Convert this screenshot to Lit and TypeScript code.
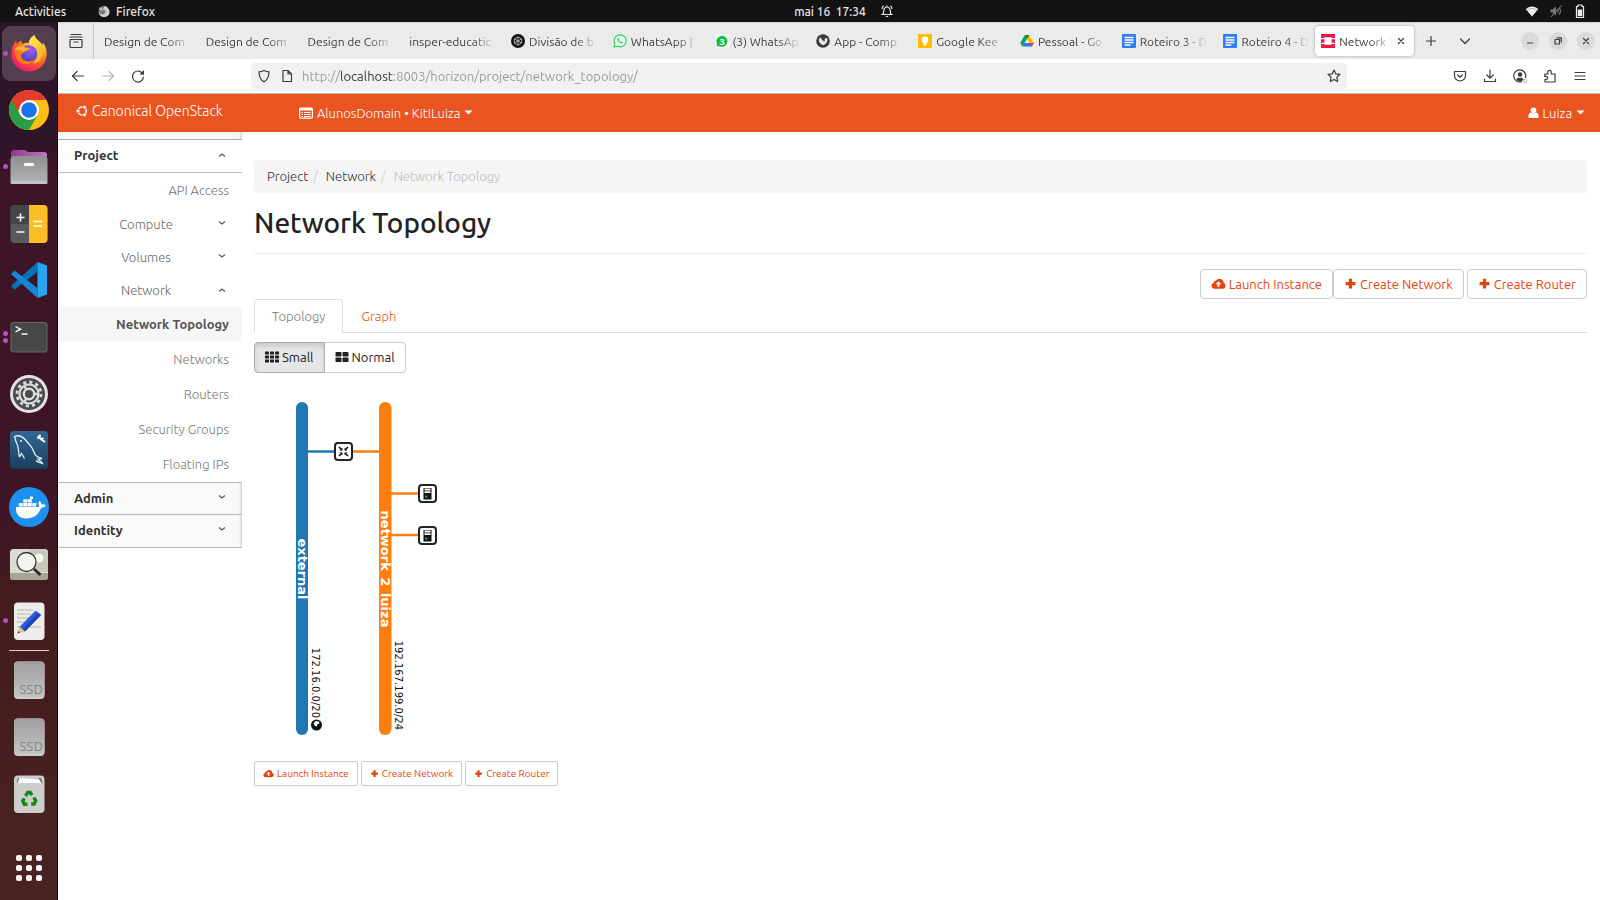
import { LitElement, html, svg, css, nothing } from "lit";
import { customElement } from "lit/decorators.js";
import { classMap } from "lit/directives/class-map.js";

const box = (size: number, content: unknown, view = 24) =>
  html`<svg width=${size} height=${size} viewBox="0 0 ${view} ${view}" aria-hidden="true">${content}</svg>`;

/* ---------- dock artwork ---------- */
const art = {
  firefox: svg`
    <defs>
      <radialGradient id="ffa" cx=".75" cy=".15" r="1"><stop offset="0" stop-color="#fff04a"/><stop offset=".35" stop-color="#ffb01f"/><stop offset=".62" stop-color="#ff5a2c"/><stop offset=".85" stop-color="#f7265f"/><stop offset="1" stop-color="#d0147a"/></radialGradient>
      <radialGradient id="ffb" cx=".6" cy=".3" r=".8"><stop offset="0" stop-color="#a05bff"/><stop offset="1" stop-color="#3e3fb8"/></radialGradient>
      <linearGradient id="ffc" x1="0" y1="0" x2="1" y2="1"><stop offset="0" stop-color="#fff352"/><stop offset="1" stop-color="#ffa41c"/></linearGradient>
    </defs>
    <path d="M20 38.500C10 38.500 2.300 31 2.300 21.500 2.300 16 4 11.500 7 7.500L8 11 12 7.500 13 11C16 9.500 19 9.500 20 9.800 20 7 22 4 25.500 2 26 6 31 8 33.500 12L34 9.500C36.800 13 37.700 17 37.700 21 37.700 31 30 38.500 20 38.500z" fill="url(#ffa)"/>
    <circle cx="20" cy="20.500" r="8.300" fill="url(#ffb)"/>
    <path d="M25.500 2C26 8 34 10 34 19 34 27 28 31 24 30 29 27 30 20 27 15.500 25 12.500 20 13 20 9.800 20 7 22 4 25.500 2z" fill="url(#ffc)"/>
    <path d="M5.500 17C8 13.500 12 13 15 14.500L20.500 15C19.500 18 17 18 15.500 18.500 13.500 20 13 22 11.500 22 12.500 28 20 30 24 27 21 33 12 32 8.500 27 6.500 24 5.500 20 5.500 17z" fill="#ff7a1d"/>
    <path d="M5 17C9 12 13 12.500 15.500 14.500L20.500 15C19 17.500 16 17.500 14.500 19 11 17 8 16.500 5 17z" fill="#ffb52b"/>`,
  chrome: svg`
    <circle cx="20" cy="20" r="20" fill="#fcc013"/>
    <path d="M37.300 10H20L20 20H2.700V10A20 20 0 0 1 37.300 10z" fill="#e33b2e"/>
    <path d="M2.700 10L11.300 25 20 29.500 28.700 25 20 40A20 20 0 0 1 2.700 10z" fill="#2a9b47"/>
    <circle cx="20" cy="20" r="10" fill="#fff"/><circle cx="20" cy="20" r="7.800" fill="#1a73e8"/>`,
  files: svg`
    <defs><linearGradient id="fla" x1="0" y1="0" x2="1" y2="0"><stop offset="0" stop-color="#8c3a8e"/><stop offset="1" stop-color="#c873cc"/></linearGradient>
    <linearGradient id="flb" x1="0" y1="0" x2="0" y2="1"><stop offset="0" stop-color="#8f8f8f"/><stop offset="1" stop-color="#b4b4b4"/></linearGradient></defs>
    <path d="M2 6a3 3 0 0 1 3-3h11l3 2h16a3 3 0 0 1 3 3v12H2z" fill="url(#fla)"/>
    <rect x="1.500" y="9" width="37" height="28" rx="3.500" fill="url(#flb)"/><rect x="1.500" y="34" width="37" height="3" rx="1.500" fill="#c4c4c4"/>
    <rect x="15" y="16" width="10" height="3" rx="1" fill="#fff"/>`,
  calc: svg`
    <rect x="1.500" y="1" width="37" height="38" rx="4" fill="#5a5a5a"/><path d="M5.500 1H20v19H1.500V5a4 4 0 0 1 4-4z" fill="#454545"/>
    <path d="M20 1h14.500a4 4 0 0 1 4 4v30a4 4 0 0 1-4 4H20z" fill="#fcbd26"/>
    <path d="M7.500 13.500h8M11.500 9.500v8M7.500 28h8" stroke="#fff" stroke-width="1.600"/><path d="M24.500 17.500h8.500M24.500 22h8.500" stroke="#fff" stroke-width="1.500"/>`,
  code: svg`
    <path d="M28.500 2L2 26l3.500 3.500 23-17.500z" fill="#0b72b8"/><path d="M28.500 38L2 14l3.500-3.500 23 17.500z" fill="#1387d3"/>
    <path d="M28.500 2L38 5.500v29L28.500 38z" fill="#27a5f2"/>`,
  terminal: svg`
    <rect x="1.500" y="5" width="37" height="30.500" rx="3.500" fill="#696969"/><rect x="2.500" y="6" width="35" height="28.500" rx="2.500" fill="#474747"/>
    <path d="M6.500 9.500l5 2.700-5 2.700M12.500 17h6" stroke="#fff" stroke-width="1.400" fill="none"/>`,
  settings: svg`
    <circle cx="20" cy="20" r="19" fill="#e2e2e2"/><circle cx="20" cy="20" r="16" fill="#4b4b4b"/>
    <circle cx="20" cy="20" r="12" fill="none" stroke="#dcdcdc" stroke-width="2.800" stroke-dasharray="3.140 3.140"/>
    <circle cx="20" cy="20" r="9.500" fill="none" stroke="#dcdcdc" stroke-width="2.200"/>
    <circle cx="20" cy="20" r="5.200" fill="none" stroke="#dcdcdc" stroke-width="2.400"/>
    <path d="M25.500 20H30M17.200 15.200L15 11.400M17.200 24.800L15 28.600" stroke="#dcdcdc" stroke-width="2.400"/>`,
  mysql: svg`
    <defs><linearGradient id="mya" x1="0" y1="0" x2="0" y2="1"><stop offset="0" stop-color="#2f6797"/><stop offset="1" stop-color="#193f5c"/></linearGradient></defs>
    <rect x="1" y="1" width="38" height="38" rx="4" fill="url(#mya)"/>
    <path d="M10.500 27C9 22 10 18 8 14 6 10 6 7.500 5.500 6.500 9 5 13 6 16 9.500 20 14 23 16 25 22c1 3 2 5 8 6.500-2 .5-2 1-4 .7 1.500 2 4 2 4.500 4.300-2-1.200-5-1-6.500-3M10.500 27l2-3.500 3 5" fill="none" stroke="#e4edf4" stroke-width="1.300"/>
    <circle cx="12" cy="11" r=".9" fill="#fff"/><path d="M29 6l4 4 3 2M32.500 9.500l2-1.500M28.500 8.500l3-3.500" stroke="#fff" stroke-width="2" fill="none"/>`,
  docker: svg`
    <circle cx="20" cy="20" r="20" fill="#1d91ee"/>
    <path d="M7 20h21.500c1 0 1.500-.5 1.700-1.500-1.200-2-.8-3.500.3-4.800 1.400 1 2 2.500 1.800 3.700 1.600-.2 3.300 0 4.500.9-.8 1.800-2.400 2.500-4.600 2.500C29.500 28 24.500 31.500 17 31.500 10 31.500 6.500 27 7 20z" fill="#fff"/>
    <path d="M9.800 16h4v3.500h-4zM14.300 16h4v3.500h-4zM18.800 16h4v3.500h-4zM23.300 16h4v3.500h-4zM14.300 12.200h4v3.400h-4zM18.800 12.200h4v3.400h-4zM21 9.500h3v2.500h-3z" fill="#fff"/>`,
  viewer: svg`
    <rect x="1" y="5" width="38" height="31" rx="3.500" fill="#dcdbd2"/><path d="M20 5h15.500A3.500 3.500 0 0 1 39 8.500V28H24z" fill="#c9c8bd"/>
    <path d="M1 29h38v3.500a3.500 3.500 0 0 1-3.500 3.500h-31A3.500 3.500 0 0 1 1 32.500z" fill="#a6a493"/><circle cx="30" cy="14" r="4.500" fill="#f5f5f2"/>
    <circle cx="17.500" cy="18" r="9.500" fill="#f3f3f0" stroke="#3a3a3a" stroke-width="1.300"/><path d="M25 25l6.500 6" stroke="#2b2b2b" stroke-width="2.800"/>`,
  editor: svg`
    <rect x="5" y="1.500" width="30.500" height="37.500" rx="4" fill="#ececec"/>
    <path d="M8 9h16M8 13h14M8 17h14M8 21h11M8 26h24" stroke="#b9b49c" stroke-width="1.200"/>
    <path d="M26.500 9.500L32 14 16 30.500 10.500 26z" fill="#2c5fdb"/><path d="M29 11.500L32 14 16 30.500l-2.700-2z" fill="#1c45b4"/>
    <path d="M10.500 26l5.500 4.500-7.500 2.300z" fill="#f4bd86"/><path d="M9.300 30l1.600 1.600-2.600 1z" fill="#333"/>`,
  ssd: svg`
    <defs><linearGradient id="sda" x1="0" y1="0" x2="0" y2="1"><stop offset="0" stop-color="#9f9f9f"/><stop offset="1" stop-color="#c4c4c4"/></linearGradient></defs>
    <rect x="5" y="1.500" width="30.500" height="37.500" rx="4" fill="#d0d0d0"/><rect x="5" y="1.500" width="30.500" height="36" rx="4" fill="url(#sda)"/>
    <text x="22" y="34" text-anchor="middle" font-family="Open Sans, sans-serif" font-size="13" fill="#858585">SSD</text>`,
  trash: svg`
    <rect x="5" y="1.500" width="30.500" height="37.500" rx="4" fill="#cdcdcd"/><path d="M9 4h23l1.500 5h-26z" fill="#6f6f6f"/><path d="M10.500 4l19 .5 3 4.500H8.500z" fill="#fafafa"/>
    <g fill="none" stroke="#118a11" stroke-width="3.400"><path d="M16.500 22l2.200-3.500h2.600l1.700 2.600"/><path d="M24.800 23.500l1.900 3.200-1.500 3.300h-3"/><path d="M18.500 30.200h-3.200L13.800 27l1.500-2.600"/></g>`,
};

/* ---------- small line icons ---------- */
const line = (d: string) => svg`<path d=${d} fill="none" stroke="currentColor" stroke-width="1.200" stroke-linecap="round" stroke-linejoin="round"/>`;
const cloud = svg`<path d="M13.500 7.300C13.500 4.500 11.300 3 9 3 7.300 3 6 3.800 5.300 5.100 4 4.700 2.700 5.700 2.900 7.200 1.300 7.800.5 9 .5 10.300.5 12 1.800 13.500 3.700 13.500h8.600c1.800 0 3.200-1.400 3.200-3.200 0-1.400-.8-2.500-2-3z" fill="currentColor"/><path d="M8 5.500L4.900 8.800H7v3h2v-3h2.100z" fill="#fff"/>`;
const plus = svg`<path d="M6 2h4v4h4v4h-4v4H6v-4H2V6h4z" fill="currentColor"/>`;

const fav: Record<string, unknown> = {
  gpt: svg`<circle cx="7" cy="7" r="7" fill="#111"/><path d="M7 2.800l3.600 2.100v4.200L7 11.200 3.400 9.100V4.900zM7 2.800v4.200l3.600 2.100M3.400 4.900L7 7v4.200M3.400 9.100L7 7l3.600-2.100" fill="none" stroke="#ddd" stroke-width=".7"/>`,
  wa: svg`<path d="M1 13l.9-3.200A6 6 0 1 1 4.200 12.100z" fill="#f0f7f2" stroke="#2fd366" stroke-width="1.200"/><path d="M4.600 4.200c.7-.8 1.300-.2 1.700 1l-.5.8c.5 1 1.200 1.700 2.200 2.100l.8-.7c1.200.4 1.600.8.9 1.600-2 1.700-6.500-2.700-5.100-4.800z" fill="#2fd366"/>`,
  wa3: svg`<path d="M0 0h14v14H0z" fill="#f6f6f6"/><path d="M1.500 12.500l.5-2.700A5.500 5.500 0 1 1 4 12z" fill="#0bc13f"/><text x="7" y="10.500" font-family="Open Sans, sans-serif" font-size="9" font-weight="700" text-anchor="middle" fill="#fff">3</text>`,
  app: svg`<circle cx="7" cy="7" r="6.800" fill="#3b3b3b"/><path d="M2.800 5l2.200-2 1 2.500 2 1.700 1-2.700 2.200-.5.3 2.500-1.300 3-2.700 1.700-2.700-1.200-1.600-2z" fill="#e8e8e8"/><path d="M4.500 2.500l4 4.700" stroke="#3b3b3b" stroke-width="1.200"/>`,
  keep: svg`<rect width="14" height="14" rx="1" fill="#fbbc04"/><circle cx="7" cy="6" r="3.400" fill="#fff"/><rect x="5.500" y="9" width="3" height="2.500" fill="#fff"/>`,
  drive: svg`<path d="M4.800 1h4.400L4.600 9 2.400 12.600.2 9z" fill="#11a25b"/><path d="M4.800 1h4.400l4.600 8H9.400z" fill="#fbbc04"/><path d="M4.600 9h9.200l-2.200 3.600H2.400z" fill="#2d79ea"/><path d="M9.400 9h4.400l-2.200 3.600z" fill="#e94335"/><path d="M4.800 1L7 4.900 9.200 1z" fill="#188038"/>`,
  docs: svg`<rect width="14" height="14" rx="1" fill="#2f7df4"/><path d="M2.500 3.500h9M2.500 6h9M2.500 8.500h9M2.500 11h6" stroke="#fff" stroke-width="1.300"/>`,
  os: svg`<path d="M0 0h14v4h-3.500V3.300h-7V4H0zM0 5.200h3.500v3.600H0zM10.500 5.200H14v3.600h-3.500zM0 10h3.500v.7h7V10H14v4H0z" fill="#ed1944"/>`,
};

interface Tab { title: string; icon?: string; active?: boolean }
const tabs: Tab[] = [
  { title: "Design de Com" }, { title: "Design de Com" }, { title: "Design de Com" },
  { title: "insper-educatic" }, { title: "Divisão de b", icon: "gpt" }, { title: "WhatsApp |", icon: "wa" },
  { title: "(3) WhatsAp", icon: "wa3" }, { title: "App - Comp", icon: "app" }, { title: "Google Kee", icon: "keep" },
  { title: "Pessoal - Go", icon: "drive" }, { title: "Roteiro 3 - D", icon: "docs" }, { title: "Roteiro 4 - D", icon: "docs" },
  { title: "Network T", icon: "os", active: true },
];

const base = css`
  * { box-sizing: border-box; }
  button, input { font: inherit; color: inherit; border: 0; padding: 0; margin: 0; background: none; }
  a { color: inherit; text-decoration: none; }
  svg { display: block; flex: none; }
`;

@customElement("system-bar")
class SystemBar extends LitElement {
  static styles = [base, css`
    :host { display: grid; grid-template-columns: 1fr auto 1fr; align-items: center; height: 22px; background: #131313; color: #e6e6e6; font-size: 12px; font-weight: 500; padding: 0 13px 0 15px; }
    .side { display: flex; align-items: center; gap: 32px; }
    .app { display: flex; align-items: center; gap: 6px; }
    .mid { display: flex; align-items: center; gap: 14px; padding-left: 86px; }
    .end { justify-content: flex-end; gap: 10px; }
    time { white-space: pre; }
  `];
  render() {
    return html`
      <div class="side"><button>Activities</button>
        <button class="app">${box(12, svg`<circle cx="6" cy="6.300" r="5.500" fill="#777"/><path d="M7.800.5C8 3 11.500 3.500 11.500 7S9 12 6 12C3 12 .8 9.800.8 7c1.200 2.800 4.400 3 5.900 1.400C9 6 6.500 4.500 5 4.600 5 2.500 7 2 7.800.5z" fill="#cfcfcf"/><path d="M1 4l1-2 1.200 1L5.500 4.800 3.500 6z" fill="#bbb"/>`, 12)}Firefox</button></div>
      <div class="mid"><time>mai 16  17:34</time>
        ${box(14, svg`<path d="M2.500 10.500c1.500-1 1-3 1.500-5S5.500 3 7 3s2.500.5 3 2.500 0 4 1.500 5zM5.800 12.500h2.400M7 3V1.500M2 5c0-1.500.6-2.500 1.600-3.300M12 5c0-1.500-.6-2.500-1.600-3.300" fill="none" stroke="#e6e6e6" stroke-width="1.200"/>`, 14)}</div>
      <div class="side end">
        ${box(14, svg`<path d="M7 12.500L.8 5.200C2.500 3.300 4.600 2.500 7 2.500s4.500.8 6.200 2.700z" fill="#eee"/><path d="M2 6.200c3-2.400 7-2.400 10 0" fill="none" stroke="#999" stroke-width=".7"/>`, 14)}
        ${box(14, svg`<path d="M1.500 5.500h2L7 2.500v9l-3.500-3h-2z" fill="#777"/><path d="M8.500 5c1 1 1 3 0 4M10 3.500c2 2 2 5 0 7M2 13L12.500 1.500" fill="none" stroke="#777" stroke-width="1.100"/>`, 14)}
        ${box(14, svg`<path d="M5 1h4v1.500h1.500v11h-7v-11H5z" fill="none" stroke="#eee" stroke-width="1.200"/><rect x="4.800" y="5.500" width="4.400" height="6.700" fill="#eee"/>`, 14)}
      </div>`;
  }
}

@customElement("app-dock")
class AppDock extends LitElement {
  static styles = [base, css`
    :host { display: flex; flex-direction: column; width: 58px; padding-top: 3px; background: linear-gradient(170deg, #2d152a 0%, #2f1529 14%, #3c1527 17%, #3d1527 52%, #451c1f 66%, #471f20 84%, #492321 100%); border-right: 1px solid #0d0408; }
    button { display: grid; place-items: center; flex: 1 1 0; min-height: 0; position: relative; margin: 0 1px 0 2px; border: solid transparent; border-width: 1px 0; border-radius: 9px; background-clip: padding-box; }
    .on { background-color: #533f4e; }
    .dots { position: absolute; left: 1px; top: 0; bottom: 0; display: flex; flex-direction: column; justify-content: center; gap: 2px; }
    .dots i { width: 5px; height: 5px; border-radius: 50%; background: #b452b8; }
    hr { border: 0; height: 1px; width: 40px; margin: 1px auto; background: #d8cfd0; }
    .apps { flex: 0 0 78px; padding-top: 14px; }
  `];
  item(name: keyof typeof art, label: string, dots = 0, on = false) {
    return html`<button class=${classMap({ on })} aria-label=${label}>
      ${dots ? html`<span class="dots">${Array.from({ length: dots }, () => html`<i></i>`)}</span>` : nothing}
      ${box(40, art[name], 40)}</button>`;
  }
  render() {
    return html`
      ${this.item("firefox", "Firefox", 1, true)}${this.item("chrome", "Chrome")}${this.item("files", "Files", 1)}
      ${this.item("calc", "Calculator")}${this.item("code", "Visual Studio Code")}${this.item("terminal", "Terminal", 2)}
      ${this.item("settings", "Settings")}${this.item("mysql", "MySQL Workbench")}${this.item("docker", "Docker")}
      ${this.item("viewer", "Image Viewer")}${this.item("editor", "Text Editor", 1)}
      <hr>
      ${this.item("ssd", "Drive 1")}${this.item("ssd", "Drive 2")}${this.item("trash", "Trash")}
      <button class="apps" aria-label="Show Applications">${box(28, svg`${[1, 11, 21].map(y => [1, 11, 21].map(x => svg`<rect x=${x} y=${y} width="6" height="6" rx="2" fill="#f4f4f4"/>`))}`, 28)}</button>`;
  }
}

@customElement("browser-chrome")
class BrowserChrome extends LitElement {
  static styles = [base, css`
    :host { display: block; color: #3c3c3c; font-size: 12px; }
    .strip { display: flex; height: 37px; background: #ebebeb; border-top: 1px solid #d2d2d2; }
    .list { width: 36px; display: grid; place-items: center; border-right: 1px solid #c8c8c8; }
    .tabs { display: flex; flex: 1; min-width: 0; }
    .tab { flex: 1 1 0; min-width: 0; display: flex; align-items: center; gap: 4px; padding: 0 5px 0 10px; text-align: left; }
    .tab span { flex: 1; min-width: 0; overflow: hidden; white-space: nowrap; -webkit-mask-image: linear-gradient(to right, #000 calc(100% - 24px), transparent 100%); }
    .active { flex-basis: 4px; background: #fff; margin: 3px 0; padding: 0 6px; border-radius: 4px; box-shadow: 0 0 3px #0005; }
    .active svg:last-child { margin-left: -4px; }
    .end { display: flex; width: 186px; align-items: center; padding: 0 5px 0 10px; }
    .new { margin-right: 20px; }
    .win { display: flex; gap: 10px; margin-left: auto; }
    .win button { width: 18px; height: 18px; border-radius: 50%; background: #dadada; display: grid; place-items: center; }
    .bar { display: flex; align-items: center; height: 35px; background: #fff; border-bottom: 1px solid #bdbdbd; padding: 0 12px; }
    .nav { display: flex; gap: 14px; width: 181px; }
    .dim { color: #b5b5b5; }
    .url { flex: 1; display: flex; align-items: center; gap: 7px; height: 26px; padding: 0 5px; background: #f1f1f1; border-radius: 4px; font-size: 13px; }
    .url input { flex: 1; min-width: 0; outline: 0; height: 24px; color: transparent; -webkit-background-clip: text; background-clip: text; background-image: linear-gradient(to right, #979797 0 38px, #333 38px 92px, #979797 92px); }
    .tools { display: flex; gap: 14px; margin-left: 105px; }
  `];
  render() {
    return html`
      <div class="strip">
        <button class="list" aria-label="Tab overview">${box(16, line("M3 1.500h10M2 4h12M2 6.500h12v7.200a.8.800 0 0 1-.8.800H2.800a.8.800 0 0 1-.8-.8zM6 9h4"), 16)}</button>
        <div class="tabs" role="tablist">${tabs.map(t => html`
          <button role="tab" class=${classMap({ tab: true, active: !!t.active })}>
            ${t.icon ? box(14, fav[t.icon], 14) : nothing}<span>${t.title}</span>
            ${t.active ? box(14, line("M4.500 4.500l5 5M9.500 4.500l-5 5"), 14) : nothing}</button>`)}
        </div>
        <div class="end">
          <button class="new" aria-label="New tab">${box(14, line("M7 2.500v9M2.500 7h9"), 14)}</button>
          <button aria-label="List all tabs">${box(14, line("M2.500 5L7 9.500 11.500 5"), 14)}</button>
          <div class="win">
            <button aria-label="Minimize">${box(10, line("M2.500 7h5"), 10)}</button>
            <button aria-label="Restore">${box(10, line("M2 3.500h4.500V8H2zM4 1.800h4.300V6"), 10)}</button>
            <button aria-label="Close">${box(10, line("M2.500 2.500l5 5M7.500 2.500l-5 5"), 10)}</button>
          </div>
        </div>
      </div>
      <div class="bar">
        <div class="nav">
          <button aria-label="Back">${box(16, line("M13.500 8h-11M7 3.500L2.500 8 7 12.500"), 16)}</button>
          <button class="dim" aria-label="Forward">${box(16, line("M2.500 8h11M9 3.500L13.500 8 9 12.500"), 16)}</button>
          <button aria-label="Reload">${box(16, svg`${line("M13 6.200A5.500 5.500 0 1 0 13.500 9")}<path d="M14 2v4.500H9.500z" fill="currentColor"/>`, 16)}</button>
        </div>
        <label class="url">
          ${box(16, line("M8 2.500c1.800 1 3.500 1.300 5 1.300 0 5-1.300 8-5 10-3.700-2-5-5-5-10 1.500 0 3.200-.3 5-1.300z"), 16)}
          ${box(16, line("M4 2.500h5L12.500 6v7.500H4zM9 2.500V6h3.500"), 16)}
          <input aria-label="Address" value="http://localhost:8003/horizon/project/network_topology/">
          ${box(16, line("M8 2l1.800 3.900 4.200.5-3.100 2.900.8 4.200L8 11.500l-3.700 2 .8-4.200L2 6.400l4.200-.5z"), 16)}
        </label>
        <div class="tools">
          <button aria-label="Save to Pocket">${box(16, line("M2.500 3.500h11V7.500a5.500 5.500 0 0 1-11 0zM5.500 6.800L8 9.200l2.500-2.400"), 16)}</button>
          <button aria-label="Downloads">${box(16, line("M8 2v8M4.800 7L8 10.200 11.200 7M2.500 11v2.500h11V11"), 16)}</button>
          <button aria-label="Account">${box(16, svg`${line("M13.500 9.500A6 6 0 1 0 9.500 13.600")}<circle cx="8" cy="6.500" r="2.200" fill="currentColor"/><path d="M4.200 11.500c.5-2.500 7-2.500 7.500 0-1.500 2-6 2-7.500 0z" fill="currentColor"/><circle cx="13" cy="13" r="1.800" fill="none" stroke="#bbb"/>`, 16)}</button>
          <button aria-label="Extensions">${box(16, line("M2.800 6H5.800V4a1.700 1.700 0 0 1 3.400 0V6H13v8H3v-2.600h1.200a1.500 1.500 0 0 0 0-3H2.800z"), 16)}</button>
          <button aria-label="Menu">${box(16, line("M3 4.500h10M3 8h10M3 11.500h10"), 16)}</button>
        </div>
      </div>`;
  }
}

@customElement("side-nav")
class SideNav extends LitElement {
  static styles = [base, css`
    :host { display: block; width: 184px; font-size: 13px; font-weight: 300; color: #666; }
    .stub { height: 8px; background: #f8f8f8; border-bottom: 1px solid #aaa; box-shadow: inset -3px 0 3px -2px #0003; }
    button { display: flex; width: 100%; align-items: center; }
    .head { height: 33px; padding: 0 14px 2px 16px; justify-content: space-between; font-weight: 600; color: #333; border-bottom: 1px solid #bbb; }
    .shut { background: #f9f9f9; box-shadow: inset -3px 0 3px -2px #0003; }
    .first { border-top: 1px solid #bbb; }
    .group { height: 33px; padding: 0 14px 2px; }
    .group span { flex: 1; text-align: center; padding-left: 4px; }
    .link { display: flex; align-items: center; justify-content: flex-end; height: 35px; padding: 0 13px 2px 0; color: #777; }
    .current { background: #f6f6f6; font-weight: 600; color: #555; }
  `];
  chev(up: boolean) { return box(12, svg`<path d=${up ? "M3 7.500L6 5 9 7.500" : "M3 3.500L6 6 9 3.500"} fill="none" stroke="#555" stroke-width="1.100"/>`, 12); }
  render() {
    return html`<nav>
      <div class="stub"></div>
      <button class="head">Project${this.chev(true)}</button>
      <a class="link" href="#api">API Access</a>
      <button class="group"><span>Compute</span>${this.chev(false)}</button>
      <button class="group"><span>Volumes</span>${this.chev(false)}</button>
      <button class="group"><span>Network</span>${this.chev(true)}</button>
      <a class="link current" href="#topology">Network Topology</a>
      ${["Networks", "Routers", "Security Groups", "Floating IPs"].map(t => html`<a class="link" href="#item">${t}</a>`)}
      <button class="head shut first">Admin${this.chev(false)}</button>
      <button class="head shut">Identity${this.chev(false)}</button>
    </nav>`;
  }
}

@customElement("topology-map")
class TopologyMap extends LitElement {
  static styles = [base, css`
    :host { display: block; }
    .name { font: bold 13px "DejaVu Sans", sans-serif; fill: #fff; text-anchor: middle; }
    .cidr { font: 10px "DejaVu Sans", sans-serif; fill: #111; text-anchor: end; }
  `];
  node(x: number, y: number, inner: unknown) {
    return svg`<g transform="translate(${x} ${y})"><rect x="1" y="1" width="17" height="17" rx="3" fill="#fff" stroke="#222" stroke-width="2"/>${inner}</g>`;
  }
  render() {
    const server = svg`<rect x="5.500" y="4" width="8" height="11.500" fill="#111"/><path d="M6.500 4.500h6v2h-6zM6.500 7.300h6v1.700h-6z" fill="#fff"/><rect x="7" y="11.500" width="2.500" height="2" fill="#3f9f43"/>`;
    const router = svg`<path d="M5 5l3 3M14 5l-3 3M5 14l3-3M14 14l-3-3" stroke="#111" stroke-width="1.500"/><path d="M5.600 8.400h2.800V5.600zM13.400 8.400h-2.800V5.600zM5.600 10.600h2.800v2.800zM13.400 10.600h-2.800v2.800z" fill="#111"/>`;
    return html`<svg width="240" height="352" viewBox="0 0 240 352" role="img" aria-label="Network topology">
      <rect x="42" y="10" width="12" height="333" rx="6" fill="#1f77b4"/>
      <rect x="125" y="10" width="12.500" height="333" rx="6" fill="#ff7f0e"/>
      <path d="M54 59.500h27" stroke="#1f77b4" stroke-width="2.500"/>
      <path d="M98 59.500h28M136 101.500h28M136 143h28" stroke="#ff7f0e" stroke-width="2.500"/>
      ${this.node(80, 50, router)}${this.node(164, 92, server)}${this.node(164, 134, server)}
      <text class="name" transform="translate(44 177) rotate(90)">external</text>
      <text class="name" transform="translate(127 177) rotate(90)">network_2_luiza</text>
      <text class="cidr" transform="translate(58 326) rotate(90)">172.16.0.0/20</text>
      <text class="cidr" transform="translate(141 338) rotate(90)">192.167.199.0/24</text>
      <circle cx="62.500" cy="333" r="5.500" fill="#111"/><path d="M59.500 331.500l2-2.500 3.500.5.500 2-2 .5-.5 2.500-2-.5z" fill="#fff"/>
    </svg>`;
  }
}

@customElement("app-root")
class AppRoot extends LitElement {
  static styles = [base, css`
    :host { display: flex; flex-direction: column; min-height: 100vh; background: #fff; font-family: "Ubuntu", "Open Sans", "Noto Sans", sans-serif; }
    .desk { display: flex; flex: 1; }
    .win { flex: 1; min-width: 0; }
    header { display: flex; align-items: center; height: 38px; background: #e95420; color: #fff; font-size: 13px; font-weight: 300; padding: 0 15px 0 18px; border-bottom: 1px solid #d8501f; }
    header > * { display: flex; align-items: center; gap: 4px; }
    .brand { width: 223px; font-size: 14px; padding-bottom: 3px; }
    .user { margin-left: auto; }
    .page { display: flex; }
    main { flex: 1; min-width: 0; padding: 28px 13px 0 12px; font-size: 13px; }
    ol { display: flex; list-style: none; margin: 0; padding: 0 13px 1px; height: 33px; align-items: center; background: #f5f5f5; border-radius: 4px; font-weight: 300; color: #333; }
    li + li::before { content: "/"; color: #ccc; padding: 0 8px 0 5px; }
    .here { color: #bbb; }
    h1 { margin: 12px 0 0; padding-bottom: 12px; font-size: 28px; line-height: 36px; font-weight: 500; color: #222; border-bottom: 1px solid #eee; }
    .actions { display: flex; justify-content: flex-end; margin-top: 15px; }
    .btn { display: flex; align-items: center; justify-content: center; gap: 3px; height: 30px; padding: 0 10px 1px; border: 1px solid #ccc; border-radius: 4px; color: #e4440c; white-space: nowrap; }
    .btn:last-child { margin-left: 3px; }
    .tabs { display: flex; border-bottom: 1px solid #ddd; font-weight: 300; }
    .tabs button { height: 33px; padding: 0 17px; border: 1px solid transparent; color: #e95420; }
    .tabs .sel { border-color: #ddd #ddd #fff; border-radius: 4px 4px 0 0; margin-bottom: -1px; height: 34px; color: #777; background: #fff; }
    .sizes { display: flex; margin-top: 9px; margin-bottom: 19px; }
    .sizes button { display: flex; align-items: center; gap: 3px; height: 31px; padding: 0 10px 1px; border: 1px solid #ccc; border-radius: 0 4px 4px 0; border-left: 0; color: #222; }
    .sizes .sel { border: 1px solid #adadad; border-radius: 4px 0 0 4px; background: #e6e6e6; box-shadow: inset 0 3px 5px #0002; }
    .small { display: flex; gap: 3px; margin-top: 17px; }
    .small .btn { height: 25px; font-size: 10px; padding: 0 8px 1px; border-radius: 2px; margin: 0; }
  `];
  caret = box(9, svg`<path d="M.5 2.500h8L4.500 6.500z" fill="#fff"/>`, 9);
  buttons(size: number) {
    return html`<button class="btn">${box(size, cloud, 16)}Launch Instance</button>
      <button class="btn">${box(size - 2, plus, 16)}Create Network</button>
      <button class="btn">${box(size - 2, plus, 16)}Create Router</button>`;
  }
  render() {
    return html`
      <system-bar></system-bar>
      <div class="desk">
        <app-dock></app-dock>
        <div class="win">
          <browser-chrome></browser-chrome>
          <header>
            <a class="brand" href="#home">${box(12, svg`<circle cx="6.300" cy="6" r="4" fill="none" stroke="#fff" stroke-width="1.600"/><g fill="#fff" stroke="#e95420" stroke-width=".8"><circle cx="2" cy="6" r="1.900"/><circle cx="8.500" cy="2.200" r="1.900"/><circle cx="8.500" cy="9.800" r="1.900"/></g>`, 12)}Canonical OpenStack</a>
            <button class="domain">${box(14, svg`<rect x=".6" y="2.100" width="12.800" height="10" rx="1" fill="none" stroke="#fff" stroke-width="1.200"/><path d="M1 2h12v2.500H1zM2.500 6h1.500v1H2.500zM5 6h6.500v1H5zM2.500 8h1.500v1H2.500zM5 8h6.500v1H5zM2.500 10h1.500v1H2.500zM5 10h6.500v1H5z" fill="#fff"/>`, 14)}AlunosDomain • KitILuiza ${this.caret}</button>
            <button class="user">${box(11, svg`<circle cx="5.500" cy="3.300" r="2.800" fill="#fff"/><path d="M.5 11V8.500C.5 6.500 2 5.500 3 5.500c1.500 1 3.500 1 5 0 1 0 2.500 1 2.500 3V11z" fill="#fff"/>`, 11)}Luiza ${this.caret}</button>
          </header>
          <div class="page">
            <side-nav></side-nav>
            <main>
              <ol><li><a href="#project">Project</a></li><li><a href="#network">Network</a></li><li class="here">Network Topology</li></ol>
              <h1>Network Topology</h1>
              <div class="actions">${this.buttons(15)}</div>
              <div class="tabs" role="tablist"><button class="sel" role="tab">Topology</button><button role="tab">Graph</button></div>
              <div class="sizes">
                <button class="sel">${box(14, svg`${[1.5, 5.5, 9.5].map(y => [0, 5, 10].map(x => svg`<rect x=${x} y=${y} width="4" height="3" rx=".5" fill="#222"/>`))}`, 14)}Small</button>
                <button>${box(14, svg`${[2, 7.5].map(y => [.5, 7.5].map(x => svg`<rect x=${x} y=${y} width="6" height="4.500" rx=".8" fill="#222"/>`))}`, 14)}Normal</button>
              </div>
              <topology-map></topology-map>
              <div class="small">${this.buttons(11)}</div>
            </main>
          </div>
        </div>
      </div>`;
  }
}
